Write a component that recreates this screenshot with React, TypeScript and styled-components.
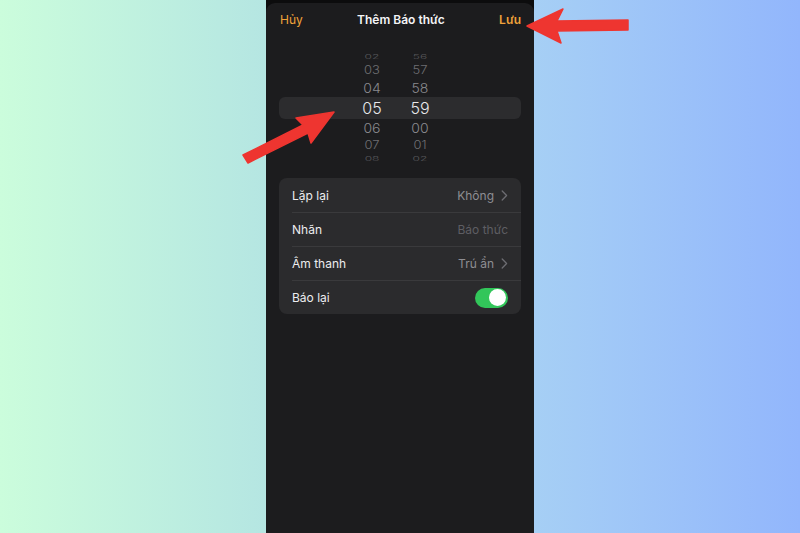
import styled, { createGlobalStyle } from "styled-components";

const GlobalStyle = createGlobalStyle`
  html, body {
    margin: 0;
    padding: 0;
  }
  body {
    font-family: Inter, "Noto Sans", "Liberation Sans", sans-serif;
    -webkit-font-smoothing: antialiased;
  }
`;

type TWheelRow = {
  hour: string;
  minute: string;
  level: 0 | 1 | 2 | 3;
};

const wheelRows: TWheelRow[] = [
  { hour: "02", minute: "56", level: 3 },
  { hour: "03", minute: "57", level: 2 },
  { hour: "04", minute: "58", level: 1 },
  { hour: "05", minute: "59", level: 0 },
  { hour: "06", minute: "00", level: 1 },
  { hour: "07", minute: "01", level: 2 },
  { hour: "08", minute: "02", level: 3 },
];

// per level: row height, font size, colour, vertical squash
const levelStyle = {
  0: { h: 22, size: 16, color: "#e8e8ea", squash: 1 },
  1: { h: 18, size: 14, color: "#8a8a8e", squash: 0.95 },
  2: { h: 17, size: 13, color: "#6e6e72", squash: 0.88 },
  3: { h: 10, size: 12, color: "#58585c", squash: 0.5 },
};

const App = (): JSX.Element => {
  return (
    <Page>
      <GlobalStyle />
      <Phone>
        <Sheet>
          <Header>
            <NavButton>Hủy</NavButton>
            <Title>Thêm Báo thức</Title>
            <NavButton $bold>Lưu</NavButton>
          </Header>

          <Wheel>
            {wheelRows.map((row) => (
              <WheelRow key={row.hour} $level={row.level}>
                <WheelCell $level={row.level}>{row.hour}</WheelCell>
                <WheelCell $level={row.level}>{row.minute}</WheelCell>
              </WheelRow>
            ))}
          </Wheel>

          <Card>
            <Row>
              <Label>Lặp lại</Label>
              <Value>
                Không <Chevron />
              </Value>
            </Row>
            <Row>
              <Label>Nhãn</Label>
              <Placeholder>Báo thức</Placeholder>
            </Row>
            <Row>
              <Label>Âm thanh</Label>
              <Value>
                Trú ẩn <Chevron />
              </Value>
            </Row>
            <Row>
              <Label>Báo lại</Label>
              <Toggle $on>
                <Knob />
              </Toggle>
            </Row>
          </Card>
        </Sheet>
      </Phone>

      <Arrows viewBox="0 0 800 533">
        <polygon points="527,26 563,9 557,21 628,20 628,30 557,31 561,43" />
        <polygon points="334,112 296,118 303,125 243,155 248,163 308,133 311,143" />
      </Arrows>
    </Page>
  );
};

const Chevron = () => (
  <svg width="7" height="11" viewBox="0 0 7 11">
    <path
      d="M1.2 1 L5.6 5.5 L1.2 10"
      fill="none"
      stroke="#6d6d72"
      strokeWidth="1.3"
      strokeLinecap="round"
      strokeLinejoin="round"
    />
  </svg>
);

const Page = styled.div`
  position: relative;
  width: 800px;
  height: 533px;
  overflow: hidden;
  display: flex;
  justify-content: center;
  background: linear-gradient(
    90deg,
    #cbfddc 0%,
    #b5e6e2 33%,
    #a6cff5 67%,
    #92b6fc 100%
  );
`;

const Phone = styled.div`
  width: 268px;
  height: 100%;
  background: #0c0c0d;
  display: flex;
  flex-direction: column;
`;

const Sheet = styled.div`
  flex: 1;
  margin-top: 3px;
  border-radius: 9px 9px 0 0;
  background: #1c1c1e;
  display: flex;
  flex-direction: column;
`;

const Header = styled.div`
  height: 32px;
  padding: 0 13px 0 14px;
  display: flex;
  align-items: center;
  justify-content: space-between;
`;

const NavButton = styled.span<{ $bold?: boolean }>`
  color: #f0a23a;
  font-size: 12px;
  font-weight: ${({ $bold }) => ($bold ? 600 : 400)};
`;

const Title = styled.span`
  color: #f4f4f6;
  font-size: 12px;
  font-weight: 600;
`;

const Wheel = styled.div`
  margin: 17px 13px 0;
  display: flex;
  flex-direction: column;
`;

const WheelRow = styled.div<{ $level: 0 | 1 | 2 | 3 }>`
  height: ${({ $level }) => levelStyle[$level].h}px;
  display: flex;
  align-items: center;
  padding-left: 75px;
  gap: 12px;
  border-radius: 6px;
  background: ${({ $level }) => ($level === 0 ? "#2c2c2e" : "transparent")};
`;

const WheelCell = styled.span<{ $level: 0 | 1 | 2 | 3 }>`
  width: 36px;
  text-align: center;
  font-size: ${({ $level }) => levelStyle[$level].size}px;
  font-weight: 300;
  color: ${({ $level }) => levelStyle[$level].color};
  transform: scaleY(${({ $level }) => levelStyle[$level].squash});
  line-height: 1;
`;

const Card = styled.div`
  margin: 14px 13px 0;
  background: #2b2b2d;
  border-radius: 8px;
  display: flex;
  flex-direction: column;
  padding-left: 13px;
`;

const Row = styled.div`
  height: 34px;
  display: flex;
  align-items: center;
  justify-content: space-between;
  padding-right: 13px;
  box-sizing: border-box;

  & + & {
    border-top: 1px solid #3a3a3c;
  }
`;

const Label = styled.span`
  color: #ededef;
  font-size: 12px;
`;

const Value = styled.span`
  display: flex;
  align-items: center;
  gap: 7px;
  color: #8e8e93;
  font-size: 12px;
`;

const Placeholder = styled.span`
  color: #5e5e63;
  font-size: 12px;
`;

const Toggle = styled.div<{ $on?: boolean }>`
  width: 33px;
  height: 20px;
  border-radius: 10px;
  background: ${({ $on }) => ($on ? "#32c65a" : "#39393d")};
  display: flex;
  align-items: center;
  justify-content: ${({ $on }) => ($on ? "flex-end" : "flex-start")};
  padding: 0 2px;
  box-sizing: border-box;
`;

const Knob = styled.div`
  width: 17px;
  height: 17px;
  border-radius: 50%;
  background: #ffffff;
`;

// red annotation arrows on top of the screenshot
const Arrows = styled.svg`
  position: absolute;
  inset: 0;
  width: 800px;
  height: 533px;
  pointer-events: none;

  polygon {
    fill: #ee3530;
    stroke: #ee3530;
    stroke-width: 1.5;
    stroke-linejoin: round;
  }
`;

export default App;
